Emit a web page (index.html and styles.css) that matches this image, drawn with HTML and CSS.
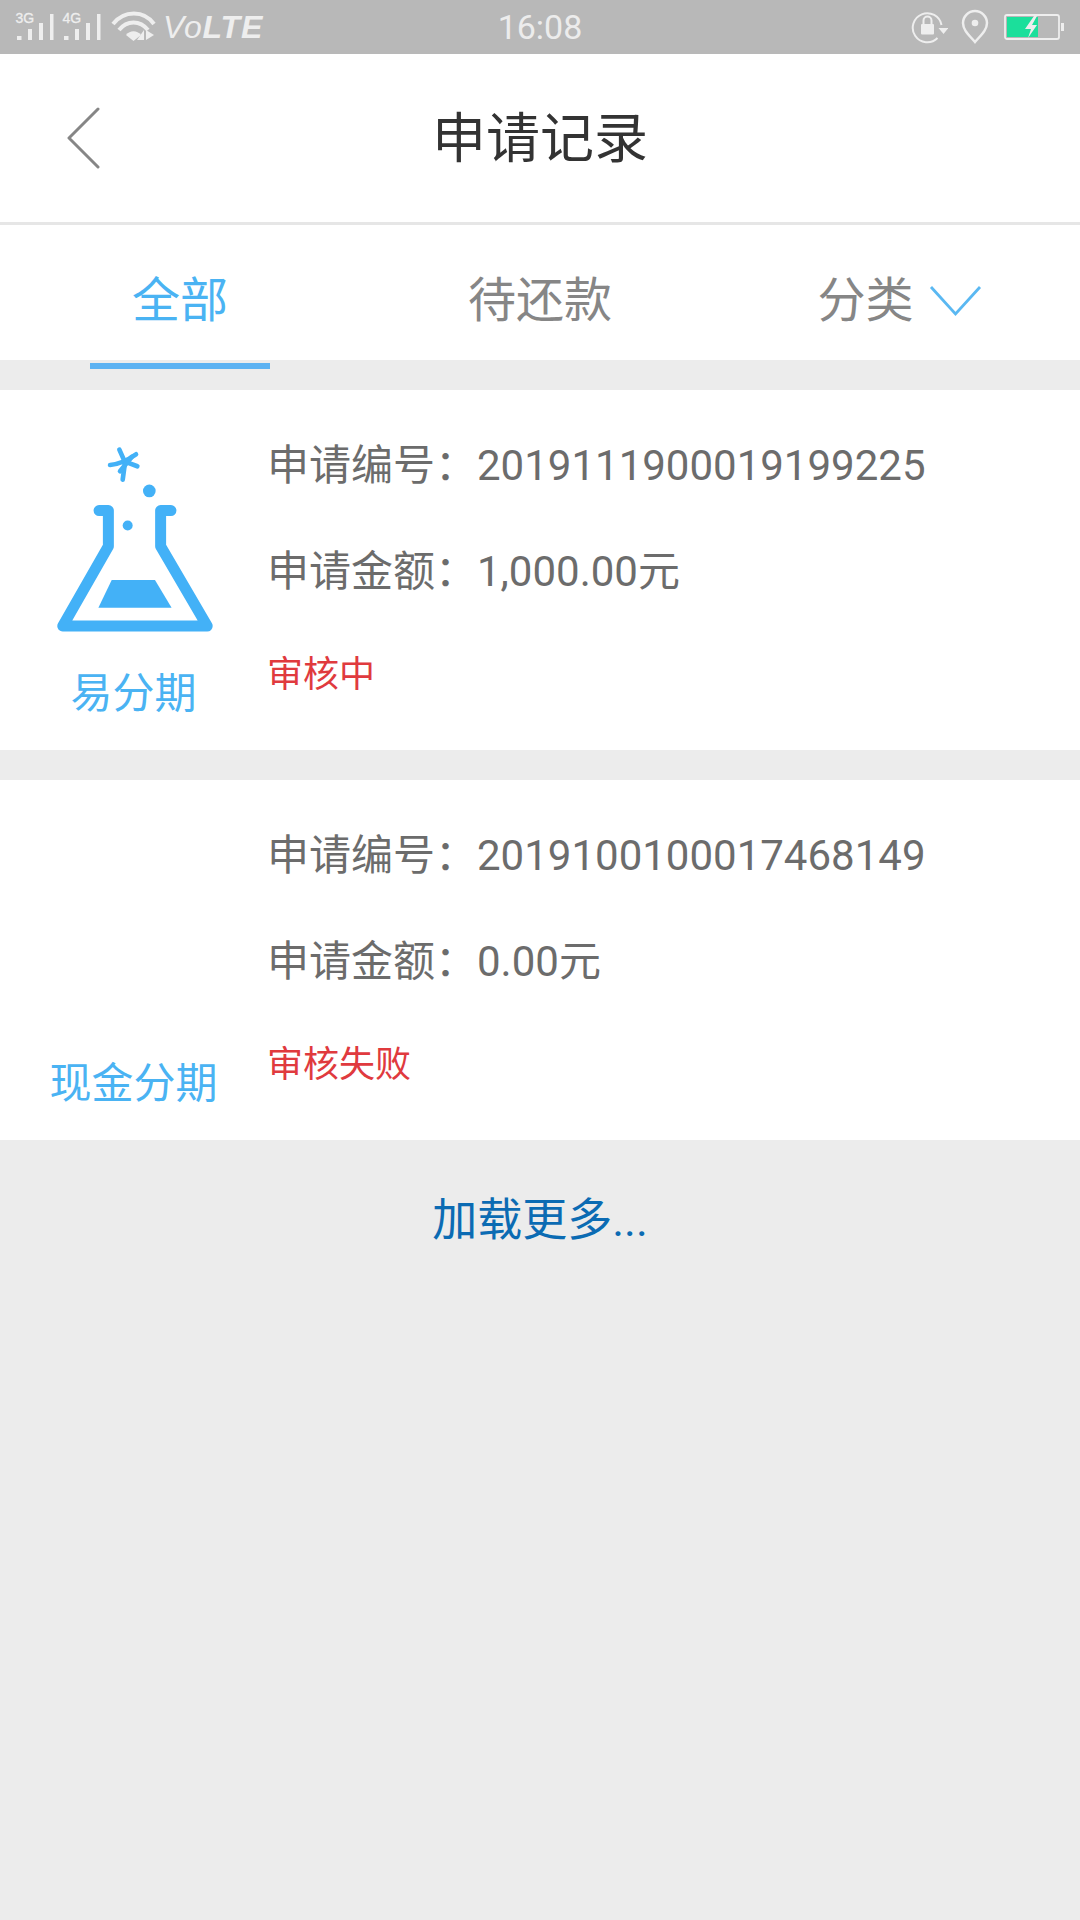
FILE: index.html
```html
<!DOCTYPE html>
<html lang="zh">
<head>
<meta charset="utf-8">
<title>申请记录</title>
<link rel="stylesheet" href="styles.css">
</head>
<body>
<div class="page">
  <div class="statusbar">
    <div class="status-left">
      <svg class="sig" viewBox="0 0 54 54"><text x="15.500" y="23" class="sig-label">3G</text><g class="bar"><rect x="17" y="36" width="4.500" height="4"/><rect x="28" y="29" width="4" height="11"/><rect x="39" y="23" width="4" height="17"/><rect x="50" y="14" width="3.500" height="26"/></g></svg>
      <svg class="sig sig2" viewBox="0 0 54 54"><text x="15.500" y="23" class="sig-label">4G</text><g class="bar"><rect x="17" y="36" width="4.500" height="4"/><rect x="28" y="29" width="4" height="11"/><rect x="39" y="23" width="4" height="17"/><rect x="50" y="14" width="3.500" height="26"/></g></svg>
      <svg class="wifi" viewBox="0 0 48 54"><g fill="none" stroke="#eee" stroke-width="4"><path d="M2 24C13 10 33 10 43 24"/><path d="M8 30C16 20 29 20 37 30"/></g><path class="fillw" d="M15 35C19 30 26 30 30 35L22.500 41Z"/><path class="fillw" d="M26 40L33 30V40ZM35 30L43 35L35 40Z"/></svg>
      <span class="volte"><i>Vo</i><b>LTE</b></span>
    </div>
    <div class="clock">16:08</div>
    <div class="status-right">
      <svg class="rot" viewBox="0 0 36 54"><path d="M26 38A14.500 14.500 0 1 1 30 25" fill="none" stroke="#eee" stroke-width="2"/><path class="fillw" d="M27 28H37L32 34Z"/><rect class="fillw" x="9.500" y="24" width="13" height="10.500" rx="1"/><path d="M12 24.500V20.500A4 4 0 0 1 20 20.500V24.500" fill="none" stroke="#eee" stroke-width="2"/></svg>
      <svg class="pin" viewBox="0 0 28 54"><path d="M14 42C8 35 2 30 2 23A12 12 0 0 1 26 23C26 30 20 35 14 42Z" fill="none" stroke="#eee" stroke-width="2.500"/><circle class="fillw" cx="14" cy="23" r="3.300"/></svg>
      <svg class="batt" viewBox="0 0 62 54"><rect x="1" y="15" width="54" height="24" rx="2" fill="none" stroke="#eee" stroke-width="1.800"/><rect x="3" y="17" width="31" height="20" fill="#1bdf9b"/><rect class="fillw" x="57" y="23" width="3" height="8"/><path class="fillw" d="M30 16L21 29H27L24 38L33 25H28L33 16Z"/></svg>
    </div>
  </div>

  <header class="topbar">
    <svg class="back" viewBox="0 0 34 62"><path d="M31 2L2 31L31 60" fill="none" stroke="#868686" stroke-width="3" stroke-linecap="round" stroke-linejoin="round"/></svg>
    <h1 class="title">申请记录</h1>
  </header>

  <nav class="tabs">
    <div class="tab tab-active">全部</div>
    <div class="tab">待还款</div>
    <div class="tab">分类<svg class="chev" viewBox="0 0 54 32"><path d="M2 2L26.500 29L51 2" fill="none" stroke="#5ab8f2" stroke-width="2.800"/></svg></div>
  </nav>

  <section class="card">
    <div class="brand">
      <svg class="flask" viewBox="60 40 510 580">
        <g fill="none" stroke="#43b1f7" stroke-width="33" stroke-linecap="round" stroke-linejoin="round">
          <path d="M207 243H235V350L98 590H532L392 350V243H423"/>
        </g>
        <g fill="#43b1f7">
          <path d="M245 452H375L425 535H205Z"/>
          <circle cx="358" cy="184" r="19"/>
          <circle cx="293" cy="288" r="15"/>
        </g>
        <g fill="none" stroke="#43b1f7" stroke-width="14" stroke-linecap="round">
          <path d="M240 106C262 104 295 90 318 74"/>
          <path d="M268 60L285 98L278 150"/>
          <path d="M285 96L322 110"/>
          <path d="M270 125L305 82"/>
        </g>
      </svg>
      <div class="brand-name">易分期</div>
    </div>
    <div class="info">
      <div class="row">申请编号：2019111900019199225</div>
      <div class="row">申请金额：1,000.00元</div>
      <div class="state">审核中</div>
    </div>
  </section>

  <section class="card">
    <div class="brand">
      <div class="flask-slot"></div>
      <div class="brand-name">现金分期</div>
    </div>
    <div class="info">
      <div class="row">申请编号：2019100100017468149</div>
      <div class="row">申请金额：0.00元</div>
      <div class="state">审核失败</div>
    </div>
  </section>

  <div class="more">加载更多...</div>
</div>
</body>
</html>
```

FILE: styles.css
```css
* { box-sizing: border-box; margin: 0; padding: 0; }
html, body { width: 1080px; height: 1920px; overflow: hidden; }
body { font-family: Roboto, "Noto Sans CJK SC", sans-serif; background: #ececec; }
.page { width: 1080px; height: 1920px; display: flex; flex-direction: column; }

.statusbar { height: 54px; background: #b8b8b8; display: grid; grid-template-columns: 1fr auto 1fr; align-items: center; color: #eee; }
.status-left { display: flex; align-items: center; height: 54px; }
.status-right { display: flex; align-items: center; justify-content: flex-end; height: 54px; }
.status-left svg, .status-right svg { height: 54px; display: block; flex: none; }
.sig { width: 54px; }
.sig2 { margin-left: -7px; }
.sig-label { font-family: "Liberation Sans", sans-serif; font-size: 14px; font-weight: 400; fill: #eee; stroke: #eee; stroke-width: .3px; }
.bar rect, .fillw { fill: #eee; }
.wifi { width: 48px; margin-left: 10px; }
.volte { font-family: "Liberation Sans", sans-serif; font-size: 32px; font-style: italic; margin-left: 4px; letter-spacing: .8px; }
.volte i { font-weight: 400; }
.volte b { font-weight: 700; }
.clock { font-size: 34px; font-weight: 400; color: #ececec; }
.rot { width: 37px; margin-right: 13px; }
.pin { width: 28px; margin-right: 14px; }
.batt { width: 64px; margin-right: 13px; }

.topbar { height: 168px; background: #fff; display: flex; align-items: center; justify-content: center; position: relative; padding-bottom: 7px; }
.back { position: absolute; left: 67px; top: 53px; width: 34px; height: 62px; }
.title { font-size: 54px; font-weight: 400; color: #333; }

.tabs { height: 138px; background: #fff; border-top: 3px solid #e6e6e6; display: grid; grid-template-columns: repeat(3, 360px); }
.tab { display: flex; align-items: center; justify-content: center; font-size: 48px; color: #868686; position: relative; padding-top: 7px; }
.tab-active { color: #4ab3f3; }
.tab-active::after { content: ""; position: absolute; left: 90px; width: 180px; height: 6px; bottom: -9px; background: #5cb2f2; }
.chev { width: 54px; height: 32px; margin-left: 15px; margin-top: 10px; }

.card { height: 360px; margin-top: 30px; background: #fff; display: flex; }
.brand { width: 267px; display: flex; flex-direction: column; align-items: center; padding-top: 53px; padding-left: 2px; }
.flask { width: 170px; height: 193px; display: block; }
.flask-slot { height: 193px; }
.brand-name { font-size: 42px; color: #4ab3f3; line-height: 60px; margin-top: 28px; margin-left: -2px; }
.info { padding-top: 23px; color: #6c6c6c; font-size: 42px; }
.row { height: 106px; line-height: 106px; white-space: nowrap; }
.state { font-size: 36px; color: #e03a3e; line-height: 98px; margin-top: 1px; }

.more { text-align: center; font-size: 45px; color: #0b6bb3; margin-top: 49px; line-height: 64px; }
```
